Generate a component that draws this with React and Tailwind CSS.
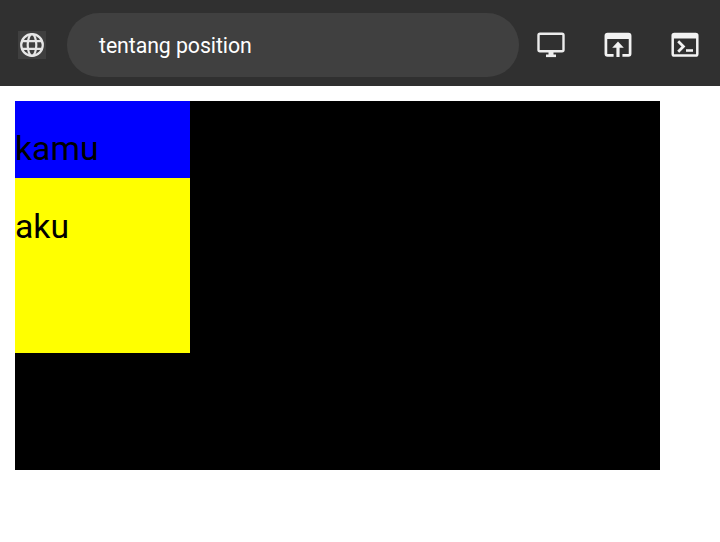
function Globe() {
  return (
    <svg className="size-7 shrink-0 bg-[#3f3f3f]" viewBox="0 0 28 28" fill="none" stroke="#e6e6e6" strokeWidth="2.200">
      <circle cx="14" cy="14" r="10.800" />
      <ellipse cx="14" cy="14" rx="4.300" ry="10.800" />
      <path d="M4 10.200h20M4 17.800h20" />
    </svg>
  );
}

function Monitor() {
  return (
    <svg className="h-[26px] w-7" viewBox="0 0 28 26" fill="none" stroke="#ececec">
      <rect x="1.500" y="1.800" width="25" height="17.400" rx="1.500" strokeWidth="2.400" />
      <path d="M14 20v4" strokeWidth="5" />
      <path d="M9 23.800h10" strokeWidth="2.600" />
    </svg>
  );
}

function OpenInBrowser() {
  return (
    <svg className="h-[26px] w-7" viewBox="0 0 28 26" fill="none" stroke="#f2f2f2">
      <path d="M9.600 23.400H3.500Q1.900 23.400 1.900 21.800V3.700Q1.900 2.100 3.500 2.100H24.500Q26.100 2.100 26.100 3.700V21.800Q26.100 23.400 24.500 23.400H18.400" strokeWidth="2.700" />
      <path d="M2 4.300h24" strokeWidth="5.400" />
      <path d="M14 25V14" strokeWidth="3.200" />
      <path d="M14 9.500L19.800 15.800H8.200Z" fill="#f2f2f2" stroke="none" />
    </svg>
  );
}

function Console() {
  return (
    <svg className="h-[26px] w-7" viewBox="0 0 28 26" fill="none" stroke="#f2f2f2">
      <rect x="1.700" y="2" width="24.600" height="21.600" rx="1.600" strokeWidth="2.500" />
      <path d="M2 4h24" strokeWidth="5" />
      <path d="M7.200 9.300L12.400 14.500L7.200 19.700" strokeWidth="2.800" />
      <path d="M15 18.500h7" strokeWidth="2.600" />
    </svg>
  );
}

export default function App() {
  return (
    <div className="h-[542px] w-[720px] overflow-hidden bg-white font-['Roboto',sans-serif]">
      <header className="flex h-[86px] items-center bg-[#303030] pt-1 pl-[18px]">
        <Globe />
        <div className="ml-[21px] flex h-16 w-[452px] items-center rounded-full bg-[#404040] pl-8 text-[21.300px] tracking-[-0.080px] text-white">
          <span className="pt-px">tentang position</span>
        </div>
        <div className="ml-[18px] flex gap-[39px]">
          <Monitor />
          <OpenInBrowser />
          <Console />
        </div>
      </header>
      <main className="mt-[15px] ml-[15px] h-[369px] w-[645px] bg-black text-[33.700px] leading-[41px] text-black">
        <div className="h-[77px] w-[175px] bg-[#0000ff] pt-[27px]">kamu</div>
        <div className="h-[175px] w-[175px] bg-[#ffff00] pt-7">aku</div>
      </main>
    </div>
  );
}
